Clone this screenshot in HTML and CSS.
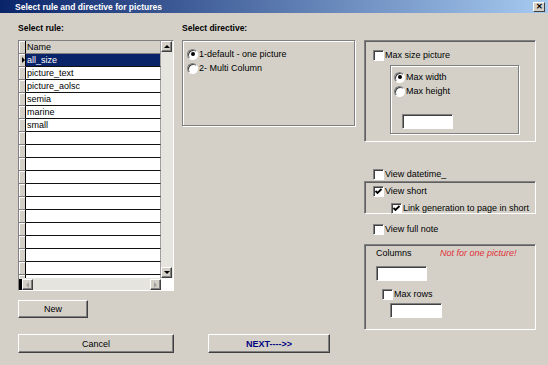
FILE: index.html
```html
<!DOCTYPE html>
<html lang="en">

<head>
    <meta charset="UTF-8">
    <title>Select rule and directive for pictures</title>
    <link rel="stylesheet" href="styles.css">
</head>

<body>
    <div class="window">

        <div class="titleBar">
            <span class="titleText">Select rule and directive for pictures</span>
            <span class="closeBtn">&#x2715;</span>
        </div>

        <div class="main">

            <!-- rules grid -->
            <div class="colRule">
                <div class="label">Select rule:</div>
                <div class="grid">
                    <div class="rows">
                        <div class="row head"><span class="ind"></span><span class="cell">Name</span></div>
                        <div class="row selected"><span class="ind"><i class="arrowRight"></i></span><span class="cell">all_size</span></div>
                        <div class="row"><span class="ind"></span><span class="cell">picture_text</span></div>
                        <div class="row"><span class="ind"></span><span class="cell">picture_aolsc</span></div>
                        <div class="row"><span class="ind"></span><span class="cell">semia</span></div>
                        <div class="row"><span class="ind"></span><span class="cell">marine</span></div>
                        <div class="row"><span class="ind"></span><span class="cell">small</span></div>
                        <div class="row"><span class="ind"></span><span class="cell"></span></div>
                        <div class="row"><span class="ind"></span><span class="cell"></span></div>
                        <div class="row"><span class="ind"></span><span class="cell"></span></div>
                        <div class="row"><span class="ind"></span><span class="cell"></span></div>
                        <div class="row"><span class="ind"></span><span class="cell"></span></div>
                        <div class="row"><span class="ind"></span><span class="cell"></span></div>
                        <div class="row"><span class="ind"></span><span class="cell"></span></div>
                        <div class="row"><span class="ind"></span><span class="cell"></span></div>
                        <div class="row"><span class="ind"></span><span class="cell"></span></div>
                        <div class="row"><span class="ind"></span><span class="cell"></span></div>
                        <div class="row"><span class="ind"></span><span class="cell"></span></div>
                        <div class="row"><span class="ind"></span><span class="cell"></span></div>
                    </div>
                    <div class="vScroll">
                        <span class="sBtn"><i class="triUp"></i></span>
                        <span class="sBtn"><i class="triDown"></i></span>
                    </div>
                    <div class="hScroll">
                        <span class="hBlack"></span>
                        <span class="sBtn"><i class="triLeft"></i></span>
                        <span class="hTrack"></span>
                        <span class="sBtn"><i class="triRight"></i></span>
                    </div>
                    <div class="corner"></div>
                </div>
                <button class="btn btnNew">New</button>
            </div>

            <!-- directive -->
            <div class="colDirective">
                <div class="label">Select directive:</div>
                <div class="etched boxDirective">
                    <div class="opt"><span class="radio on"></span>1-default - one picture</div>
                    <div class="opt"><span class="radio"></span>2- Multi Column</div>
                </div>
            </div>

            <!-- options -->
            <div class="colOptions">
                <div class="sunken boxSize">
                    <div class="opt"><span class="check"></span>Max size picture</div>
                    <div class="etched boxMax">
                        <div class="opt"><span class="radio on"></span>Max width</div>
                        <div class="opt"><span class="radio"></span>Max height</div>
                        <div class="field fieldMax"></div>
                    </div>
                </div>

                <div class="opt optDatetime"><span class="check"></span>View datetime_</div>

                <div class="sunken boxShort">
                    <div class="opt"><span class="check on"><svg viewBox="0 0 9 9"><path d="M1.5 4 L3.5 6 L7.5 2" fill="none" stroke="#000" stroke-width="1.8"/></svg></span>View short</div>
                    <div class="opt optLink"><span class="check on"><svg viewBox="0 0 9 9"><path d="M1.5 4 L3.5 6 L7.5 2" fill="none" stroke="#000" stroke-width="1.8"/></svg></span>Link generation to page in short</div>
                </div>

                <div class="opt optFull"><span class="check"></span>View full note</div>

                <div class="sunken boxColumns">
                    <div class="colHead"><span class="colName">Columns</span><span class="warn">Not for one picture!</span></div>
                    <div class="field fieldCols"></div>
                    <div class="opt optRows"><span class="check"></span>Max rows</div>
                    <div class="field fieldRows"></div>
                </div>
            </div>

        </div>

        <div class="footer">
            <button class="btn btnCancel">Cancel</button>
            <button class="btn btnNext">NEXT----&gt;&gt;</button>
        </div>

    </div>
</body>

</html>
```

FILE: styles.css
```css
body {
    margin: 0;
    background-color: #d4d0c8;
}

.window {
    width: 548px;
    height: 365px;
    overflow: hidden;
    background-color: #d4d0c8;
    font-family: "Liberation Sans", Arial, sans-serif;
    font-size: 9px;
    color: #000;
}

.titleBar {
    height: 13px;
    display: flex;
    align-items: center;
    justify-content: space-between;
    padding: 0 3px 0 15px;
    background: linear-gradient(to right, #0a246a, #a6caf0);
}

.titleText {
    color: white;
    font-weight: bold;
    font-size: 8.5px;
}

.closeBtn {
    width: 12px;
    height: 10px;
    box-sizing: border-box;
    background-color: #d4d0c8;
    border: 1px solid;
    border-color: #fff #404040 #404040 #fff;
    font-size: 8px;
    line-height: 8px;
    text-align: center;
    font-weight: bold;
}

.main {
    display: flex;
    padding: 9px 0 0 18px;
    height: 312px;
    box-sizing: border-box;
}

.label {
    height: 13px;
    line-height: 13px;
    margin-bottom: 5px;
    font-weight: bold;
    font-size: 8.5px;
}

/* grid */

.colRule {
    width: 156px;
}

.grid {
    width: 156px;
    height: 251px;
    box-sizing: border-box;
    border: 1px solid;
    border-color: #808080 #fff #fff #808080;
    display: grid;
    grid-template-columns: 1fr 12px;
    grid-template-rows: 1fr 12px;
    background-color: #fff;
}

.rows {
    overflow: hidden;
    background-color: #fff;
}

.row {
    display: flex;
    height: 13px;
}

.ind {
    width: 6px;
    height: 12px;
    background-color: #d4d0c8;
    border-right: 1px solid #000;
    border-bottom: 1px solid #808080;
    box-shadow: inset 1px 1px #fff;
    display: flex;
    align-items: center;
    justify-content: flex-end;
}

.cell {
    flex: 1;
    height: 12px;
    line-height: 12px;
    padding-left: 1px;
    border-bottom: 1px solid #111;
    border-right: 1px solid #a0a0a0;
    white-space: nowrap;
}

.row.head .cell {
    background-color: #d4d0c8;
    border-bottom-color: #808080;
}

.row.selected .cell {
    background-color: #0a246a;
    color: white;
}

.arrowRight {
    border-left: 3px solid #000;
    border-top: 3px solid transparent;
    border-bottom: 3px solid transparent;
}

.vScroll {
    background-color: #e6e4df;
    display: flex;
    flex-direction: column;
    justify-content: space-between;
}

.sBtn {
    width: 11px;
    height: 11px;
    box-sizing: border-box;
    background-color: #d4d0c8;
    border: 1px solid;
    border-color: #fff #404040 #404040 #fff;
    box-shadow: inset -1px -1px #808080;
    display: flex;
    align-items: center;
    justify-content: center;
}

.triUp {
    border-bottom: 3px solid #000;
    border-left: 3px solid transparent;
    border-right: 3px solid transparent;
}

.triDown {
    border-top: 3px solid #000;
    border-left: 3px solid transparent;
    border-right: 3px solid transparent;
}

.triLeft {
    border-right: 3px solid #a0a0a0;
    border-top: 3px solid transparent;
    border-bottom: 3px solid transparent;
}

.triRight {
    border-left: 3px solid #a0a0a0;
    border-top: 3px solid transparent;
    border-bottom: 3px solid transparent;
}

.hScroll {
    display: flex;
    background-color: #e6e4df;
    padding-top: 1px;
}

.hBlack {
    width: 3px;
    background-color: #000;
}

.hTrack {
    flex: 1;
}

.corner {
    background-color: #fff;
}

/* buttons */

.btn {
    box-sizing: border-box;
    background-color: #d4d0c8;
    border: 1px solid;
    border-color: #fff #404040 #404040 #fff;
    box-shadow: inset -1px -1px #808080;
    font-family: inherit;
    font-size: 9px;
    padding: 0;
    color: #000;
}

.btnNew {
    display: block;
    width: 70px;
    height: 18px;
    margin-top: 9px;
}

/* directive */

.colDirective {
    width: 173px;
    margin-left: 8px;
}

.etched {
    box-sizing: border-box;
    border: 1px solid #808080;
    box-shadow: inset 1px 1px #fff, 1px 1px #fff;
}

.sunken {
    box-sizing: border-box;
    border: 1px solid;
    border-color: #808080 #fff #fff #808080;
    box-shadow: inset 1px 1px #606060;
}

.boxDirective {
    height: 86px;
    padding: 6px 0 0 4px;
}

.opt {
    display: flex;
    align-items: center;
    height: 14px;
    white-space: nowrap;
}

.radio {
    width: 11px;
    height: 11px;
    box-sizing: border-box;
    border-radius: 50%;
    background-color: #fff;
    border: 1px solid;
    border-color: #808080 #fff #fff #808080;
    box-shadow: inset 1px 1px #404040;
    display: flex;
    align-items: center;
    justify-content: center;
    margin-right: 1px;
}

.radio.on::after {
    content: "";
    width: 4px;
    height: 4px;
    border-radius: 50%;
    background-color: #000;
}

.check {
    width: 11px;
    height: 11px;
    box-sizing: border-box;
    background-color: #fff;
    border: 1px solid;
    border-color: #808080 #fff #fff #808080;
    box-shadow: inset 1px 1px #404040;
    margin-right: 1px;
    display: flex;
}

.check svg {
    width: 9px;
    height: 9px;
}

/* options */

.colOptions {
    width: 172px;
    margin-left: 9px;
    padding-top: 18px;
}

.boxSize {
    height: 102px;
    padding: 7px 0 0 8px;
}

.boxMax {
    width: 129px;
    height: 69px;
    margin: 3px 0 0 17px;
    padding: 4px 0 0 3px;
}

.field {
    box-sizing: border-box;
    width: 51px;
    height: 15px;
    background-color: #fff;
    border: 1px solid;
    border-color: #808080 #fff #fff #808080;
    box-shadow: inset 1px 1px #404040;
}

.fieldMax {
    margin: 16px 0 0 8px;
}

.optDatetime {
    margin: 25px 0 0 9px;
}

.boxShort {
    height: 33px;
    margin-top: 0;
    padding: 2px 0 0 8px;
}

.optLink {
    margin: 3px 0 0 18px;
}

.optFull {
    margin: 8px 0 0 9px;
}

.boxColumns {
    height: 86px;
    margin-top: 8px;
    padding: 2px 0 0 11px;
}

.colHead {
    display: flex;
    height: 13px;
    line-height: 13px;
}

.colName {
    width: 64px;
}

.warn {
    color: #e0303a;
    font-style: italic;
}

.fieldCols {
    margin-top: 6px;
}

.optRows {
    margin: 6px 0 0 6px;
}

.fieldRows {
    width: 52px;
    margin: 2px 0 0 14px;
}

/* footer */

.footer {
    display: flex;
    gap: 34px;
    padding: 9px 0 0 18px;
}

.btnCancel {
    width: 156px;
    height: 19px;
}

.btnNext {
    width: 122px;
    height: 19px;
    color: #000080;
    font-weight: bold;
}
```
